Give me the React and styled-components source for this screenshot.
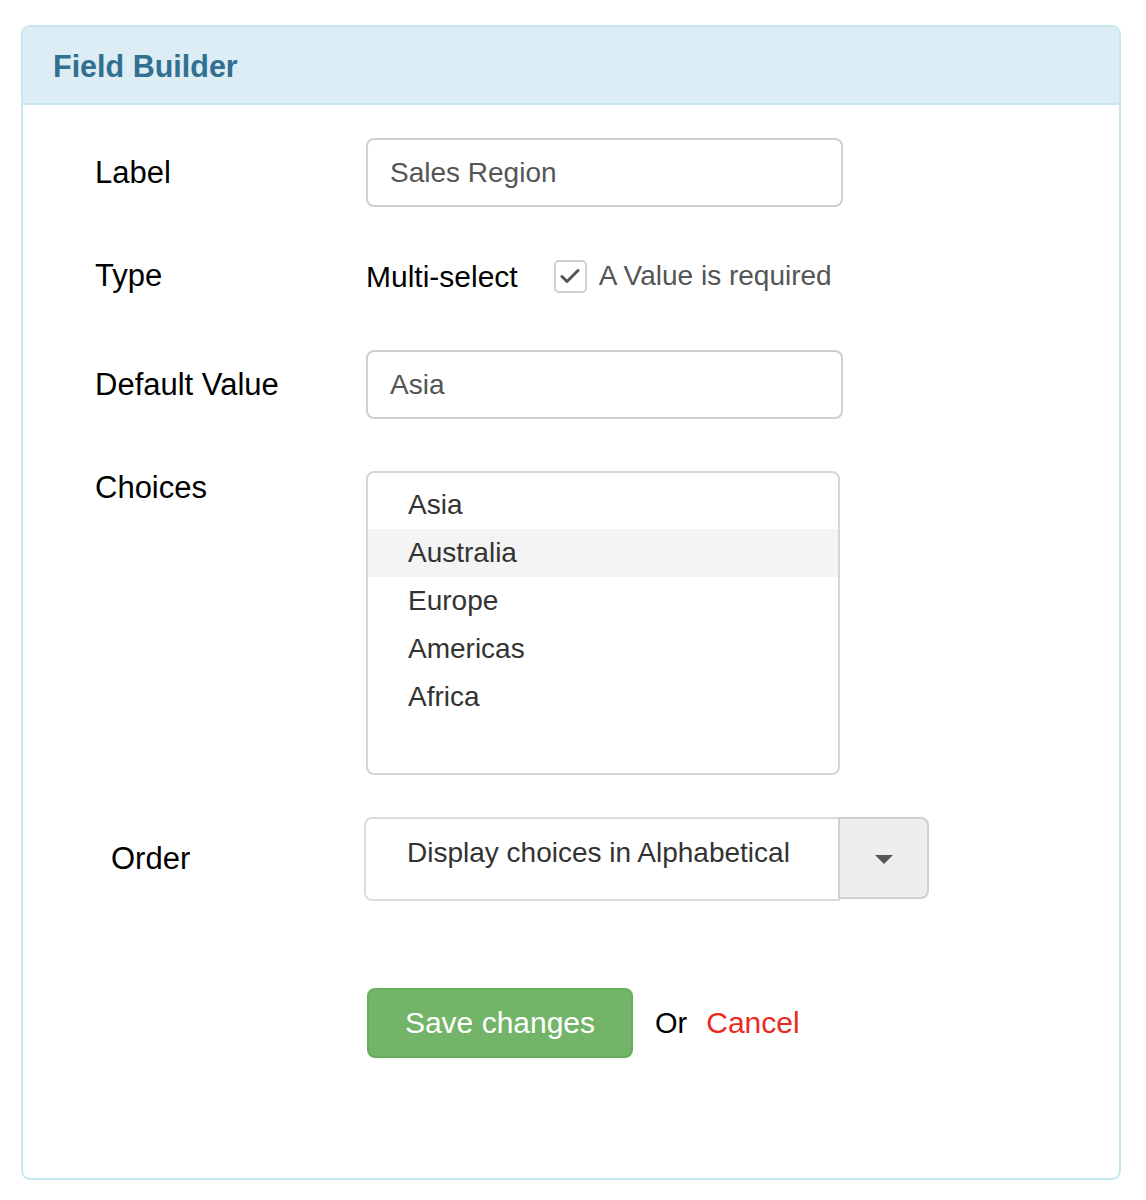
import React from 'react';
import styled, { createGlobalStyle } from 'styled-components';

const GlobalStyle = createGlobalStyle`
    body {
        margin: 0;
        background: #fff;
        font-family: "Liberation Sans", Arial, sans-serif;
    }
`;

const PanelSC = styled.div`
    margin: 25px 25px 0 21px;
    border: 2px solid #c6e7ef;
    border-radius: 9px;
    overflow: hidden;
    background: #fff;
`;

const PanelHeadSC = styled.div`
    height: 76px;
    padding: 0 30px;
    display: flex;
    align-items: center;
    background: #dcedf6;
    border-bottom: 2px solid #c6e7ef;
`;

const TitleSC = styled.h3`
    margin: 0;
    padding-top: 3px;
    color: #31708f;
    font-size: 30.5px;
    font-weight: bold;
`;

const PanelBodySC = styled.div`
    padding: 33px 0 120px 72px;
    display: flex;
    flex-direction: column;
`;

const RowSC = styled.div`
    display: flex;
    align-items: ${p => (p.$top ? 'flex-start' : 'center')};
    margin-top: ${p => p.$gap || 0}px;
    padding-left: ${p => p.$indent || 0}px;
`;

const LabelSC = styled.div`
    width: ${p => p.$width || 271}px;
    flex-shrink: 0;
    color: #000;
    font-size: 31px;
    line-height: 34px;
`;

const InputSC = styled.div`
    width: 477px;
    height: 69px;
    box-sizing: border-box;
    padding: 0 22px;
    display: flex;
    align-items: center;
    border: 2px solid #cfcfcf;
    border-radius: 8px;
    color: #555;
    font-size: 28px;
`;

const StaticTextSC = styled.span`
    color: #000;
    font-size: 30px;
    line-height: 34px;
    margin-right: 36px;
    padding-top: 2px;
`;

const CheckLabelSC = styled.label`
    display: flex;
    align-items: center;
    gap: 12px;
    color: #555;
    font-size: 28px;
`;

const CheckboxSC = styled.span`
    width: 33px;
    height: 33px;
    box-sizing: border-box;
    border: 2px solid #cfcfcf;
    border-radius: 5px;
    display: flex;
    align-items: center;
    justify-content: center;
    background: #fff;
`;

const ListBoxSC = styled.div`
    width: 474px;
    height: 304px;
    box-sizing: border-box;
    padding-top: 8px;
    border: 2px solid #d6d6d6;
    border-radius: 8px;
`;

const OptionSC = styled.div`
    height: 48px;
    padding-left: 40px;
    display: flex;
    align-items: center;
    color: #333;
    font-size: 28px;
    background: ${p => (p.$active ? '#f4f4f4' : 'transparent')};
`;

const SelectGroupSC = styled.div`
    display: flex;
    height: 84px;
`;

const SelectFieldSC = styled.div`
    width: 476px;
    box-sizing: border-box;
    padding: 18px 0 0 41px;
    border: 2px solid #dcdcdc;
    border-radius: 8px 0 0 8px;
    color: #333;
    font-size: 28px;
`;

const SelectButtonSC = styled.div`
    width: 91px;
    height: 82px;
    margin-left: -2px;
    box-sizing: border-box;
    border: 2px solid #d0d0d0;
    border-radius: 0 8px 8px 0;
    background: #eeeeee;
    display: flex;
    align-items: center;
    justify-content: center;
`;

const CaretSC = styled.span`
    width: 0;
    height: 0;
    margin-top: 2px;
    border-left: 9px solid transparent;
    border-right: 9px solid transparent;
    border-top: 9px solid #555;
`;

const ActionsSC = styled.div`
    display: flex;
    align-items: center;
    margin-top: 87px;
    padding-left: 272px;
    font-size: 30px;
`;

const SaveButtonSC = styled.button`
    width: 266px;
    height: 70px;
    border: 2px solid #68ad5e;
    border-radius: 8px;
    background: #72b568;
    color: #fff;
    font-family: inherit;
    font-size: 30px;
    padding: 0;
    cursor: pointer;
`;

const OrSC = styled.span`
    margin-left: 22px;
    color: #000;
    font-size: 29px;
`;

const CancelSC = styled.a`
    margin-left: 19px;
    color: #ea2a1f;
    text-decoration: none;
    cursor: pointer;
`;

const CHOICES = ['Asia', 'Australia', 'Europe', 'Americas', 'Africa'];

const App = () => {
    return (
        <>
            <GlobalStyle />
            <PanelSC>
                <PanelHeadSC>
                    <TitleSC>Field Builder</TitleSC>
                </PanelHeadSC>

                <PanelBodySC>
                    <RowSC>
                        <LabelSC>Label</LabelSC>
                        <InputSC>Sales Region</InputSC>
                    </RowSC>

                    <RowSC $gap={51}>
                        <LabelSC>Type</LabelSC>
                        <StaticTextSC>Multi-select</StaticTextSC>
                        <CheckLabelSC>
                            <CheckboxSC>
                                <svg width="20" height="16" viewBox="0 0 20 16">
                                    <path d="M2 8.5l5 5L18 2.5" fill="none" stroke="#555" strokeWidth="3" strokeLinecap="round" strokeLinejoin="round" />
                                </svg>
                            </CheckboxSC>
                            A Value is required
                        </CheckLabelSC>
                    </RowSC>

                    <RowSC $gap={56}>
                        <LabelSC>Default Value</LabelSC>
                        <InputSC>Asia</InputSC>
                    </RowSC>

                    <RowSC $gap={52} $top>
                        <LabelSC>Choices</LabelSC>
                        <ListBoxSC>
                            {CHOICES.map(c => (
                                <OptionSC key={c} $active={c === 'Australia'}>{c}</OptionSC>
                            ))}
                        </ListBoxSC>
                    </RowSC>

                    <RowSC $gap={42} $indent={16}>
                        <LabelSC $width={253}>Order</LabelSC>
                        <SelectGroupSC>
                            <SelectFieldSC>Display choices in Alphabetical</SelectFieldSC>
                            <SelectButtonSC>
                                <CaretSC />
                            </SelectButtonSC>
                        </SelectGroupSC>
                    </RowSC>

                    <ActionsSC>
                        <SaveButtonSC>Save changes</SaveButtonSC>
                        <OrSC>Or</OrSC>
                        <CancelSC>Cancel</CancelSC>
                    </ActionsSC>
                </PanelBodySC>
            </PanelSC>
        </>
    );
};

export default App;
